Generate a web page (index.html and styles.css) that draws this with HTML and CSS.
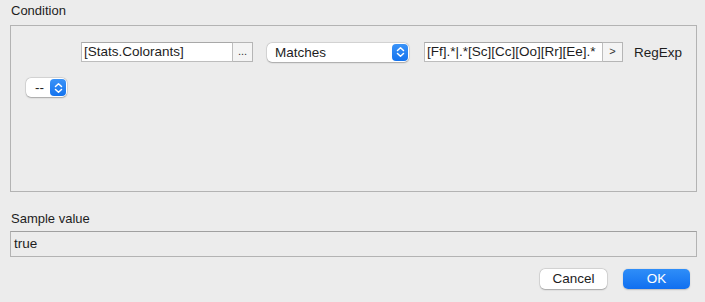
FILE: index.html
```html
<!DOCTYPE html>
<html>
<head>
<meta charset="utf-8">
<link rel="stylesheet" href="styles.css">
</head>
<body>
<div class="dialog">
  <div class="label cond-label">Condition</div>
  <div class="cond-box">
    <div class="row1">
      <div class="field field-attr">[Stats.Colorants]</div>
      <div class="sqbtn">...</div>
      <div class="popup popup-op">
        <span class="popup-text">Matches</span>
        <span class="stepper"><svg width="9" height="12" viewBox="0 0 9 12"><path d="M1.5 4.5 L4.5 1.8 L7.5 4.5 M1.5 7.5 L4.5 10.2 L7.5 7.5" fill="none" stroke="#fff" stroke-width="1.5" stroke-linecap="round" stroke-linejoin="round"/></svg></span>
      </div>
      <div class="field field-re">[Ff].*|.*[Sc][Cc][Oo][Rr][Ee].*</div>
      <div class="sqbtn">&gt;</div>
      <div class="regexp">RegExp</div>
    </div>
    <div class="row2">
      <div class="popup popup-small">
        <span class="popup-text">--</span>
        <span class="stepper"><svg width="9" height="12" viewBox="0 0 9 12"><path d="M1.5 4.5 L4.5 1.8 L7.5 4.5 M1.5 7.5 L4.5 10.2 L7.5 7.5" fill="none" stroke="#fff" stroke-width="1.5" stroke-linecap="round" stroke-linejoin="round"/></svg></span>
      </div>
    </div>
  </div>
  <div class="label sample-label">Sample value</div>
  <div class="sample-field">true</div>
  <div class="buttons">
    <div class="btn btn-cancel">Cancel</div>
    <div class="btn btn-ok">OK</div>
  </div>
</div>
</body>
</html>
```
FILE: styles.css
```css
html, body {
  margin: 0;
  padding: 0;
  background: #ececec;
}
body {
  font-family: "Liberation Sans", Arial, sans-serif;
  font-size: 13px;
  color: #1d1d1d;
  width: 705px;
  height: 302px;
  overflow: hidden;
}
.dialog {
  display: flex;
  flex-direction: column;
}
.label {
  padding-left: 11px;
  line-height: 16px;
}
.cond-label {
  padding-top: 3px;
  height: 25px;
  box-sizing: border-box;
}
.cond-box {
  margin-left: 10px;
  width: 687px;
  height: 167px;
  box-sizing: border-box;
  border: 1px solid #b3b3b3;
  padding: 16px 0 0 0;
}
.row1 {
  display: flex;
  align-items: center;
  padding-left: 70px;
  height: 20px;
}
.field {
  height: 20px;
  box-sizing: border-box;
  background: #fff;
  border: 1px solid #bdbdbd;
  border-top-color: #a8a8a8;
  line-height: 18px;
  padding-left: 2px;
  white-space: nowrap;
  overflow: hidden;
}
.field-attr {
  width: 152px;
  font-size: 13.5px;
}
.field-re {
  width: 179px;
  margin-left: 15px;
  font-size: 13.5px;
}
.sqbtn {
  width: 20px;
  height: 20px;
  box-sizing: border-box;
  border: 1px solid #b5b5b5;
  border-left: none;
  background: #f4f4f4;
  text-align: center;
  line-height: 16px;
  font-size: 11px;
  color: #333;
}
.popup {
  display: flex;
  align-items: center;
  justify-content: space-between;
  height: 19px;
  box-sizing: border-box;
  background: #fff;
  border-radius: 5px;
  box-shadow: 0 0 0 0.5px rgba(0,0,0,0.12), 0 0.5px 1.5px rgba(0,0,0,0.25);
  padding: 0 1px 0 8px;
}
.popup-op {
  width: 142px;
  margin-left: 14px;
}
.popup-text {
  line-height: 19px;
  font-size: 13.5px;
}
.stepper {
  width: 16px;
  height: 17px;
  border-radius: 4px;
  background: linear-gradient(#3a93f8, #1473ee);
  display: flex;
  align-items: center;
  justify-content: center;
}
.regexp {
  margin-left: 11px;
  font-size: 13.5px;
}
.row2 {
  display: flex;
  padding: 16px 0 0 15px;
}
.popup-small {
  width: 41px;
  padding-left: 9px;
}
.sample-label {
  padding-top: 19px;
  height: 39px;
  box-sizing: border-box;
}
.sample-field {
  margin-left: 10px;
  width: 687px;
  height: 26px;
  box-sizing: border-box;
  border: 1px solid #b3b3b3;
  border-top-color: #a0a0a0;
  padding-left: 3px;
  line-height: 24px;
  font-size: 13.5px;
}
.buttons {
  display: flex;
  justify-content: flex-end;
  gap: 16px;
  padding: 12px 15px 0 0;
}
.btn {
  width: 67px;
  height: 20px;
  box-sizing: border-box;
  border-radius: 5px;
  text-align: center;
  line-height: 20px;
  font-size: 13.5px;
}
.btn-cancel {
  background: #fff;
  box-shadow: 0 0 0 0.5px rgba(0,0,0,0.12), 0 0.5px 1.5px rgba(0,0,0,0.25);
}
.btn-ok {
  background: linear-gradient(#2f8ef8, #106ff0);
  color: #fff;
  box-shadow: 0 0.5px 1.5px rgba(0,0,0,0.2);
}
```
